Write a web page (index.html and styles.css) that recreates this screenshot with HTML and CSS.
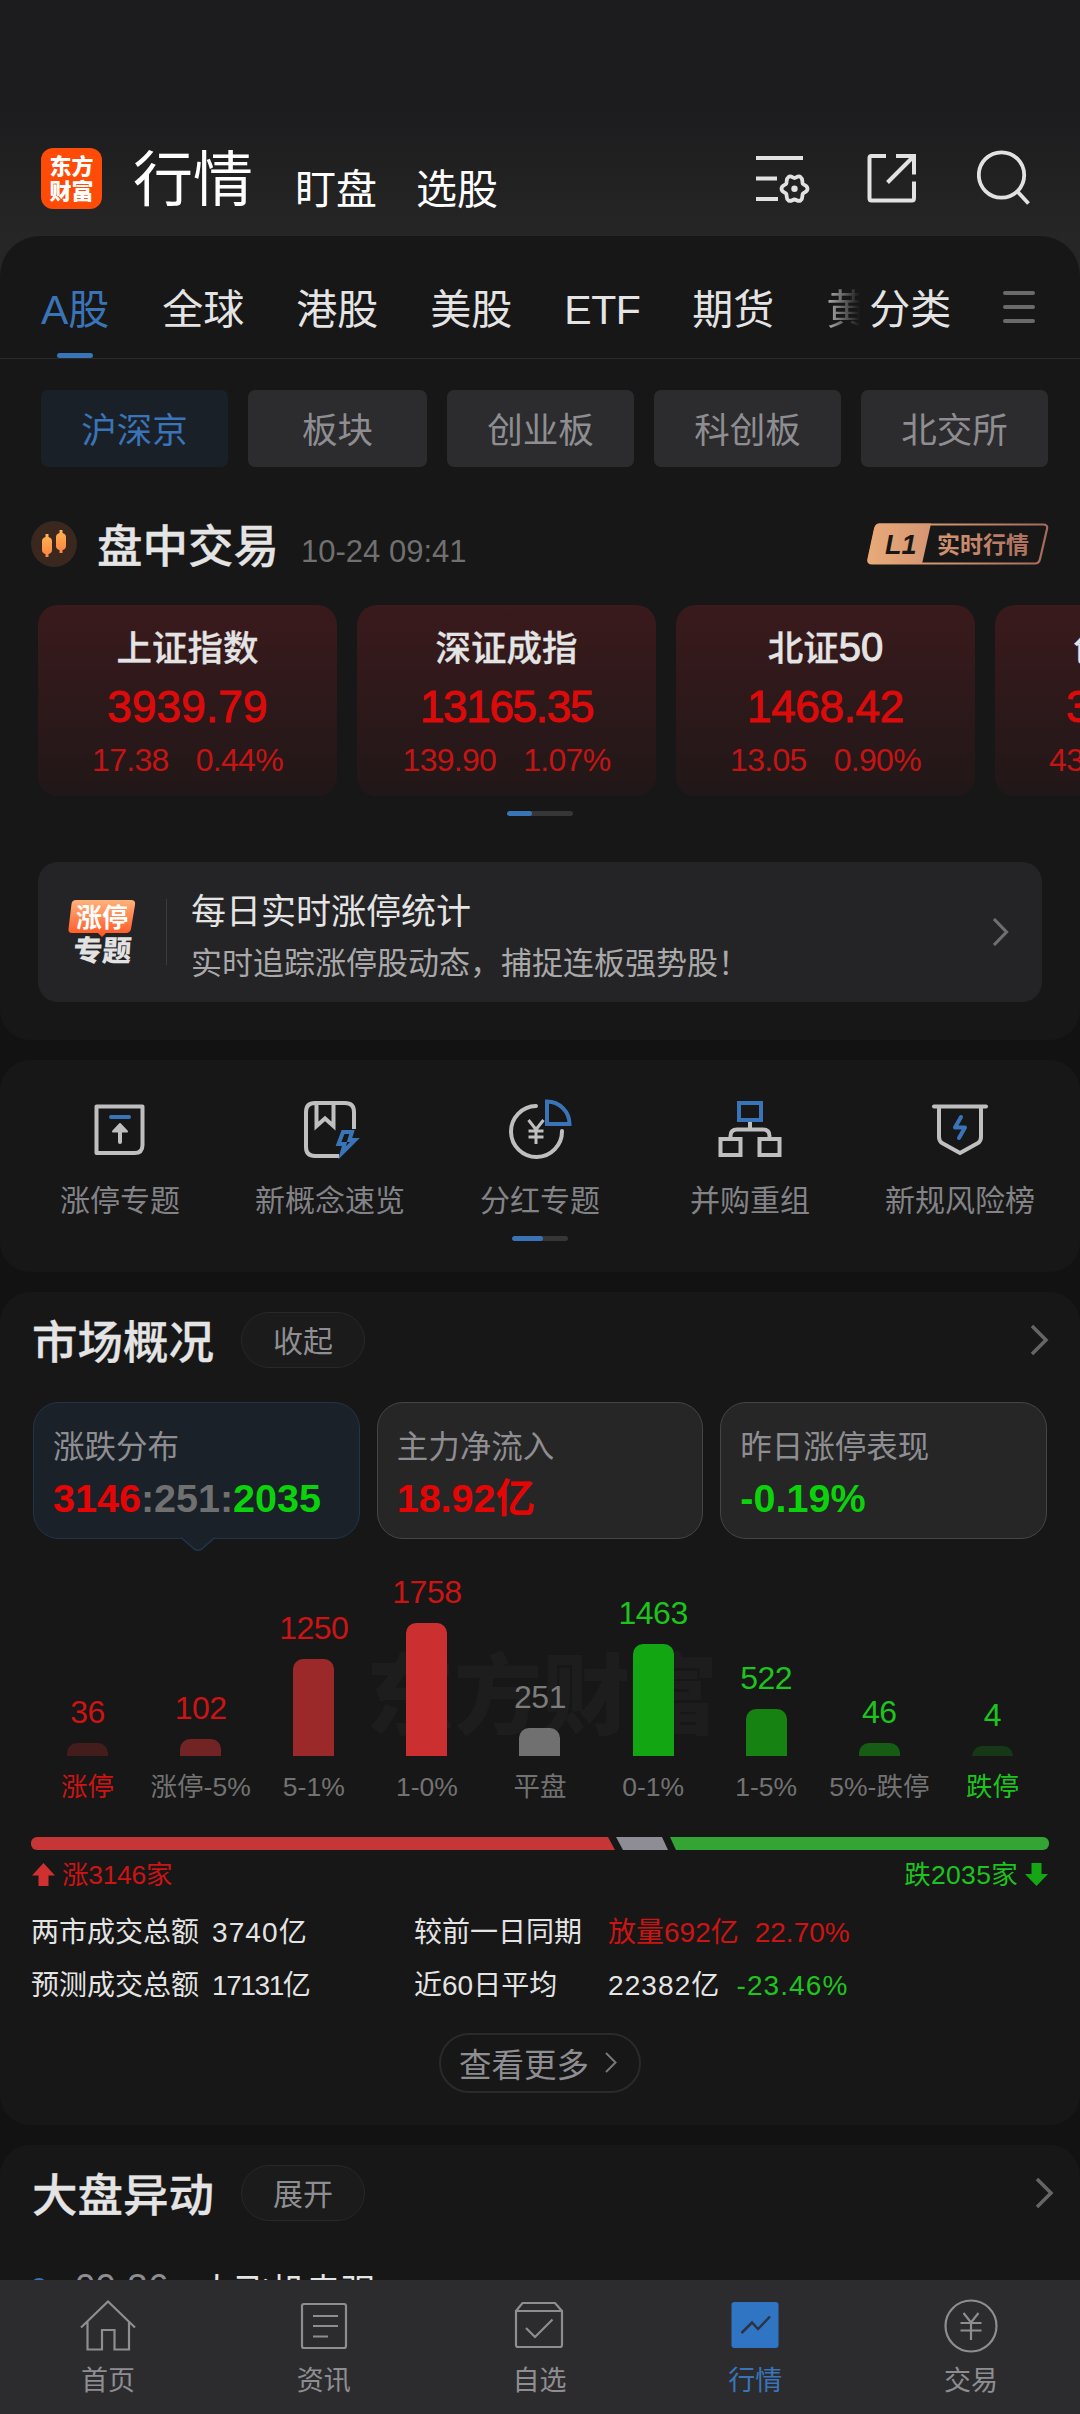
FILE: index.html
```html
<!DOCTYPE html>
<html lang="zh-CN">
<head>
    <meta charset="UTF-8">
    <title>行情</title>
    <link rel="stylesheet" href="styles.css">
</head>
<body>
<div class="page">
    <header class="header">
        <div class="logo"><span>东方</span><span>财富</span></div>
        <h1>行情</h1>
        <a class="nav-link">盯盘</a>
        <a class="nav-link">选股</a>
        <div class="header-icons">
            <svg width="54" height="50" viewBox="0 0 54 50" fill="none" stroke="#e2e2e2" stroke-width="4">
                <path d="M0 5H47M0 25.500H21M0 46H22"/>
                <path stroke-width="3.800" stroke-linejoin="round" d="M38.500 25C40.500 25 42 22 44.500 24C47.500 26 45.500 29 47 31C48.500 32.500 51.500 32.500 51.500 35.700C51.500 39 48.500 39 47 40.500C45.500 42.500 47.500 45.500 44.500 47.500C42 49 40.500 46.500 38.500 46.500S35 49 32.500 47.500C29.500 45.500 31.500 42.500 30 40.500C28.500 39 25.500 39 25.500 35.700C25.500 32.500 28.500 32.500 30 31C31.500 29 29.500 26 32.500 24C35 22 36.500 25 38.500 25Z"/>
                <circle cx="38.500" cy="35.700" r="3.200" fill="#e2e2e2" stroke="none"/>
            </svg>
            <svg class="share" width="50" height="50" viewBox="0 0 50 50" fill="none" stroke="#e2e2e2" stroke-width="4">
                <path d="M19 3H4.500Q2.500 3 2.500 5V45Q2.500 47.500 4.500 47.500H45Q47 47.500 47 45V28.500M29 3H47V21.500M46 4L20.500 29.500"/>
            </svg>
            <svg width="53" height="55" viewBox="0 0 53 55" fill="none" stroke="#e2e2e2" stroke-width="3.800">
                <circle cx="24.500" cy="25" r="22.700"/>
                <path d="M40 41L51.500 53.500"/>
            </svg>
        </div>
    </header>

    <section class="card card-top">
        <nav class="tabs">
            <a class="tab active">A股</a>
            <a class="tab">全球</a>
            <a class="tab">港股</a>
            <a class="tab">美股</a>
            <a class="tab etf">ETF</a>
            <a class="tab">期货</a>
            <a class="tab fade">黄</a>
            <a class="tab sort">分类</a>
            <div class="menu"><i></i><i></i><i></i></div>
        </nav>

        <div class="chips">
            <a class="chip active">沪深京</a>
            <a class="chip short">板块</a>
            <a class="chip">创业板</a>
            <a class="chip">科创板</a>
            <a class="chip">北交所</a>
        </div>

        <div class="trade-head">
            <svg width="46" height="46" viewBox="0 0 46 46">
                <defs>
                    <linearGradient id="candle" x1="0" y1="0" x2="0" y2="1">
                        <stop offset="0" stop-color="#ffb454"/>
                        <stop offset="1" stop-color="#ff8240"/>
                    </linearGradient>
                </defs>
                <circle cx="23" cy="23" r="23" fill="#3a281f"/>
                <path fill="url(#candle)" d="M14.500 13h3v3q3.500 1 3.500 4v9q0 3-3.500 4v3h-3v-3q-3.500-1-3.500-4v-9q0-3 3.500-4z"/>
                <path fill="url(#candle)" d="M28.500 9h3v3q3.500 1 3.500 4v9q0 3-3.500 4v3h-3v-3q-3.500-1-3.500-4v-9q0-3 3.500-4z"/>
            </svg>
            <h2>盘中交易</h2>
            <span class="time">10-24 09:41</span>
            <svg class="level" width="182" height="42" viewBox="0 0 182 42">
                <defs>
                    <linearGradient id="gold" gradientUnits="userSpaceOnUse" x1="0" y1="0" x2="182" y2="0">
                        <stop offset="0" stop-color="#e9aa78"/>
                        <stop offset="0.500" stop-color="#cd8d6f"/>
                        <stop offset="1" stop-color="#a5695c"/>
                    </linearGradient>
                </defs>
                <path fill="none" stroke="url(#gold)" stroke-width="2.200" d="M13 1.500H176Q181 1.500 180 6L173 36Q172 40.500 168 40.500H5Q.5 40.500 1.500 36L8 6Q9 1.500 13 1.500Z"/>
                <path fill="url(#gold)" d="M12 .5H64L55 41H5Q0 41 1 36L7.500 5Q8.500 .5 12 .5Z"/>
                <text class="level-num" x="18" y="31">L1</text>
                <text class="level-text" x="70" y="29.500" fill="url(#gold)">实时行情</text>
            </svg>
        </div>

        <div class="indexes">
            <div class="index">
                <h3>上证指数</h3>
                <strong class="wide">3939.79</strong>
                <p><span>17.38</span><span>0.44%</span></p>
            </div>
            <div class="index">
                <h3>深证成指</h3>
                <strong class="narrow">13165.35</strong>
                <p><span>139.90</span><span>1.07%</span></p>
            </div>
            <div class="index">
                <h3>北证<span>50</span></h3>
                <strong>1468.42</strong>
                <p><span>13.05</span><span>0.90%</span></p>
            </div>
            <div class="index">
                <h3>创业板指</h3>
                <strong>3105.41</strong>
                <p><span>43.25</span><span>1.41%</span></p>
            </div>
        </div>
        <div class="pager"><i></i></div>

        <div class="banner">
            <svg width="68" height="66" viewBox="0 0 68 66">
                <defs>
                    <linearGradient id="hot" x1="0" y1="0" x2="0" y2="1">
                        <stop offset="0" stop-color="#ffb27c"/>
                        <stop offset="1" stop-color="#ff5420"/>
                    </linearGradient>
                </defs>
                <path fill="url(#hot)" d="M8 1H63Q68 1 67 6L63 30Q62 34 58 34H38L34 38L30 34H4Q0 34 .5 30L3.500 5Q4 1 8 1Z"/>
                <text class="hot-top" x="8" y="27.500">涨停</text>
                <text class="hot-bottom" x="9" y="62" transform="skewX(-4)">专题</text>
            </svg>
            <div class="banner-text">
                <h4>每日实时涨停统计</h4>
                <p>实时追踪涨停股动态，捕捉连板强势股！</p>
            </div>
            <svg class="arrow" width="17" height="30" viewBox="0 0 17 30" fill="none" stroke="#6f6f72" stroke-width="3.200"><path d="M2 2L14.500 15L2 28"/></svg>
        </div>
    </section>

    <section class="card shortcuts">
        <div class="shortcut-row">
            <a class="shortcut">
                <svg width="64" height="60" viewBox="0 0 64 60" fill="none" stroke="#bfbfbf" stroke-width="4">
                    <path stroke-linejoin="round" d="M8.500 7.500H54.500V46Q54.500 54 46.500 54H8.500Z"/>
                    <path stroke="#3a74b8" stroke-linecap="round" d="M23 18H41"/>
                    <path stroke-linecap="round" d="M32 30V43"/>
                    <path fill="#bfbfbf" stroke-width="2" stroke-linejoin="round" d="M32 25L39 32.500H25Z"/>
                </svg>
                <span>涨停专题</span>
            </a>
            <a class="shortcut">
                <svg width="64" height="60" viewBox="0 0 64 60" fill="none" stroke="#bfbfbf" stroke-width="4">
                    <path d="M56 30V13Q56 4 47 4H17Q8 4 8 13V48Q8 57 17 57H41"/>
                    <path d="M18.500 4V27L27 19.500L35.500 27V4"/>
                    <path stroke="#3a74b8" d="M45 33H54L51.500 41H57L44 54L46.500 45H40.500Z"/>
                </svg>
                <span>新概念速览</span>
            </a>
            <a class="shortcut">
                <svg width="64" height="60" viewBox="0 0 64 60" fill="none" stroke="#bfbfbf" stroke-width="4">
                    <path stroke-linecap="round" d="M28 7A25.500 25.500 0 1 0 54 32"/>
                    <path stroke="#3a74b8" d="M39 2.500A22.500 22.500 0 0 1 61.500 25H39Z"/>
                    <path stroke-width="3" d="M20.500 21L28 30.500L35.500 21M28 30.500V45M20.500 32H35.500M20.500 38H35.500"/>
                </svg>
                <span>分红专题</span>
            </a>
            <a class="shortcut">
                <svg width="64" height="60" viewBox="0 0 64 60" fill="none" stroke="#bfbfbf" stroke-width="4">
                    <path stroke="#3a74b8" d="M21 4H43V21H21Z"/>
                    <path d="M32 23V30M12.500 39V37Q12.500 30.500 19 30.500H45Q51.500 30.500 51.500 37V39"/>
                    <path d="M2.500 40H22.500V56H2.500ZM41.500 40H61.500V56H41.500Z"/>
                </svg>
                <span>并购重组</span>
            </a>
            <a class="shortcut">
                <svg width="64" height="60" viewBox="0 0 64 60" fill="none" stroke="#bfbfbf" stroke-width="4">
                    <path stroke-linecap="round" d="M6 7.500H58"/>
                    <path stroke-linejoin="round" d="M11 8V38Q11 42 14 44L32 54L50 44Q53 42 53 38V8"/>
                    <path stroke="#3a74b8" stroke-linecap="round" stroke-linejoin="round" d="M33 18L27 28.500H37L31 39"/>
                </svg>
                <span>新规风险榜</span>
            </a>
        </div>
        <div class="pager small"><i></i></div>
    </section>

    <section class="card market">
        <div class="section-head">
            <h2>市场概况</h2>
            <a class="pill">收起</a>
            <svg class="arrow" width="19" height="32" viewBox="0 0 19 32" fill="none" stroke="#666" stroke-width="3.500"><path d="M2 2L16 16L2 30"/></svg>
        </div>

        <div class="stats">
            <div class="stat active">
                <h4>涨跌分布</h4>
                <p><b class="up">3146</b><b class="flat">:251:</b><b class="down">2035</b></p>
                <svg class="pointer" width="34" height="14" viewBox="0 0 34 14"><path fill="#1b2128" stroke="#22344a" stroke-width="1.500" d="M0 .5L14 12.500Q17 14 20 12.500L34 .5"/></svg>
            </div>
            <div class="stat">
                <h4>主力净流入</h4>
                <p><b class="up">18.92亿</b></p>
            </div>
            <div class="stat">
                <h4>昨日涨停表现</h4>
                <p><b class="down">-0.19%</b></p>
            </div>
        </div>

        <div class="chart">
            <div class="watermark">东方财富</div>
            <div class="col up"><span>36</span><i class="bar r1" style="height:13px"></i><em>涨停</em></div>
            <div class="col up"><span>102</span><i class="bar r2" style="height:17px"></i><em class="muted">涨停-5%</em></div>
            <div class="col up"><span>1250</span><i class="bar r3" style="height:97px"></i><em class="muted">5-1%</em></div>
            <div class="col up"><span>1758</span><i class="bar r4" style="height:133px"></i><em class="muted">1-0%</em></div>
            <div class="col even"><span>251</span><i class="bar even-bar" style="height:28px"></i><em class="muted">平盘</em></div>
            <div class="col down"><span>1463</span><i class="bar g4" style="height:112px"></i><em class="muted">0-1%</em></div>
            <div class="col down"><span>522</span><i class="bar g3" style="height:47px"></i><em class="muted">1-5%</em></div>
            <div class="col down"><span>46</span><i class="bar g2" style="height:13px"></i><em class="muted">5%-跌停</em></div>
            <div class="col down"><span>4</span><i class="bar g1" style="height:10px"></i><em>跌停</em></div>
        </div>

        <div class="ratio"><i class="ratio-up"></i><i class="ratio-flat"></i><i class="ratio-down"></i></div>
        <div class="ratio-text">
            <span class="up"><svg width="23" height="24" viewBox="0 0 23 24"><path fill="#d03030" d="M11.500 0L23 12.500H16.500V23H6.500V12.500H0Z"/></svg>涨3146家</span>
            <span class="down">跌2035家<svg width="23" height="24" viewBox="0 0 23 24"><path fill="#14a614" d="M11.500 23L0 11H6.500V0H16.500V11H23Z"/></svg></span>
        </div>

        <div class="turnover">
            <span>两市成交总额</span><span class="wide">3740亿</span><span>较前一日同期</span><span class="up">放量692亿<b>22.70%</b></span>
            <span>预测成交总额</span><span class="narrow">17131亿</span><span>近60日平均</span><span class="wide">22382亿<b class="down">-23.46%</b></span>
        </div>

        <a class="more">查看更多<svg width="12" height="21" viewBox="0 0 12 21" fill="none" stroke="#77777a" stroke-width="2"><path d="M1 1L10.500 10.500L1 20"/></svg></a>
    </section>

    <section class="card moves">
        <div class="section-head">
            <h2>大盘异动</h2>
            <a class="pill">展开</a>
            <svg class="arrow" width="19" height="32" viewBox="0 0 19 32" fill="none" stroke="#666" stroke-width="3.500"><path d="M2 2L16 16L2 30"/></svg>
        </div>
        <div class="move">
            <i></i><time>09:36</time><span>大飞机走强</span>
        </div>
    </section>

    <footer class="tabbar">
        <a>
            <svg width="56" height="54" viewBox="0 0 56 54" fill="none" stroke="#8e8e92" stroke-width="2.200">
                <path d="M1 28.500L28 2.500L55 28.500M7.500 23V50.500H22V31H34.500V50.500H49V23"/>
            </svg>
            <span>首页</span>
        </a>
        <a>
            <svg width="56" height="54" viewBox="0 0 56 54" fill="none" stroke="#8e8e92" stroke-width="2.200">
                <rect x="6" y="5" width="44" height="44" rx="2"/>
                <path d="M17 17H42M17 27H42M17 37.500H32"/>
            </svg>
            <span>资讯</span>
        </a>
        <a>
            <svg width="56" height="54" viewBox="0 0 56 54" fill="none" stroke="#8e8e92" stroke-width="2.200">
                <path d="M5 12L11.500 4H44L51 12V46Q51 48 49 48H7Q5 48 5 46ZM5 12H51M15 29L24 38L41.500 20.500"/>
            </svg>
            <span>自选</span>
        </a>
        <a class="active">
            <svg width="56" height="54" viewBox="0 0 56 54" fill="none">
                <rect x="4.500" y="3" width="47" height="46" rx="3" fill="#3074c4"/>
                <path stroke="#2c3340" stroke-width="2.500" d="M14.500 34L25 23.500L31 30L43 17.500"/>
            </svg>
            <span>行情</span>
        </a>
        <a>
            <svg width="56" height="54" viewBox="0 0 56 54" fill="none" stroke="#8e8e92" stroke-width="2.200">
                <circle cx="28" cy="27" r="25.500"/>
                <path d="M20.500 14L28 23.500L35.500 14M28 23.500V41M17.500 24H38.500M17.500 31.500H38.500"/>
            </svg>
            <span>交易</span>
        </a>
    </footer>
</div>
</body>
</html>
```
FILE: styles.css
```css
* { box-sizing: border-box; }
body { margin: 0; background: #121212; color: #e4e4e4; font-family: "Liberation Sans", "Noto Sans CJK SC", sans-serif; }
h1, h2, h3, h4, p { margin: 0; font-weight: 400; }
i, em { font-style: normal; }
svg { display: block; flex: none; }
.page { width: 1080px; height: 2414px; overflow: hidden; display: flex; flex-direction: column; }
.up { color: #cc1414; }
.down { color: #1dc41d; }

/* header */
.header { flex: none; height: 276px; margin-bottom: -40px; padding: 148px 50px 0 41px; display: flex; align-items: flex-start; background: linear-gradient(#1c1c1e 40%, #262626 86%); color: #fff; }
.logo { width: 61px; height: 61px; border-radius: 12px; background: #ff4b08; display: flex; flex-direction: column; align-items: center; justify-content: center; font-size: 22px; font-weight: 900; line-height: 25px; }
.header h1 { margin-left: 31px; font-size: 60px; line-height: 66px; }
.nav-link { margin: 21px 0 0 42px; font-size: 41px; line-height: 43px; }
.nav-link + .nav-link { margin-left: 39px; }
.header-icons { margin: 2px 0 0 auto; display: flex; gap: 57px; align-items: center; }
.share { margin-right: 3px; }

.card { flex: none; background: #171717; border-radius: 30px; margin-bottom: 20px; }
.card-top { height: 804px; border-radius: 40px 40px 30px 30px; }

/* market tabs */
.tabs { height: 123px; padding: 48px 0 0 41px; display: flex; gap: 52px; border-bottom: 1px solid #2a2a2a; font-size: 41px; line-height: 52px; }
.tab { position: relative; white-space: nowrap; }
.tab.active { color: #3a74b8; margin-right: 1px; }
.tab.active::after { content: ""; position: absolute; left: 16px; bottom: 0; width: 36px; height: 5px; border-radius: 3px; background: #3a74b8; }
.etf { width: 76px; letter-spacing: -0.500px; }
.fade { width: 34px; overflow: hidden; color: transparent; background: linear-gradient(90deg, #b5b5b5, #171717); background-clip: text; -webkit-background-clip: text; }
.sort { margin-left: -43px; }
.menu { margin-top: 7px; width: 32px; display: flex; flex-direction: column; gap: 10px; }
.menu i { height: 4px; border-radius: 2px; background: #6a6a6a; }

.chips { padding: 31px 32px 0 41px; display: flex; gap: 20px; }
.chip { flex: 187 1 0; height: 77px; border-radius: 7px; background: #2c2c2e; color: #8e8e92; font-size: 35.500px; line-height: 82px; text-align: center; }
.chip.short { flex-grow: 179; }
.chip.active { background: #1a2027; color: #3a74b8; }

/* indexes */
.trade-head { margin-top: 46px; height: 62px; padding: 0 31px; display: flex; align-items: center; }
.trade-head h2 { margin-left: 20px; }
h2 { padding-top: 7px; font-size: 45.500px; line-height: 66px; font-weight: 500; -webkit-text-stroke: 0.300px; }
.time { margin: 15px 0 0 22px; font-size: 31px; color: #707070; letter-spacing: 0; }
.level { margin-left: auto; }
.level-num { font: italic bold 27px "Liberation Sans", sans-serif; fill: #171717; }
.level-text { font: bold 23px "Noto Sans CJK SC", sans-serif; }

.indexes { margin-top: 30px; padding-left: 38px; display: flex; gap: 20px; overflow: hidden; }
.index { flex: none; width: 299px; height: 191px; padding-top: 20px; border-radius: 20px; background: linear-gradient(#3a1a1c, #211718); text-align: center; }
.index h3 { height: 48px; font-size: 35.500px; line-height: 48px; font-weight: 500; -webkit-text-stroke: 0.300px; }
.index h3 span { font-size: 40px; line-height: 1; -webkit-text-stroke: 1px; }
.index strong { display: block; font-size: 44px; line-height: 67px; font-weight: 400; color: #dc0b0b; -webkit-text-stroke: 1px; letter-spacing: -0.300px; }
.index strong.wide { letter-spacing: 0.200px; }
.index strong.narrow { letter-spacing: -1.300px; }
.index p { display: flex; justify-content: center; gap: 27px; font-size: 32px; line-height: 40px; color: #c41414; letter-spacing: -0.700px; }

.pager { width: 66px; height: 5px; margin: 15px auto 0; border-radius: 3px; background: #363636; overflow: hidden; }
.pager i { display: block; width: 25px; height: 5px; border-radius: 3px; background: #3a74b8; }
.pager.small { width: 56px; margin-top: 19px; }
.pager.small i { width: 31px; }

.banner { margin: 46px 38px 0; height: 140px; padding: 0 33px 0 30px; border-radius: 20px; background: #242426; display: flex; align-items: center; }
.hot-top { font: bold 26px "Noto Sans CJK SC", sans-serif; fill: #fff; }
.hot-bottom { font: 900 29px "Noto Sans CJK SC", sans-serif; fill: #e2e2e2; }
.banner-text { margin-left: 30px; padding-left: 24px; height: 66px; border-left: 1px solid #3a3a3c; }
.banner-text h4 { margin-top: -13px; font-size: 35px; line-height: 52px; }
.banner-text p { font-size: 31px; line-height: 52px; color: #a9a9a9; }
.arrow { margin-left: auto; }

/* shortcuts */
.shortcuts { height: 212px; padding: 39px 15px 0; }
.shortcut-row { display: flex; }
.shortcut { flex: 1; display: flex; flex-direction: column; align-items: center; font-size: 30px; line-height: 40px; color: #838387; }
.shortcut span { margin-top: 22px; margin-bottom: -4px; white-space: nowrap; }

/* market overview */
.market { height: 833px; padding: 0 31px; }
.section-head { height: 96px; display: flex; align-items: center; padding-left: 1px; }
.pill { margin-left: 27px; width: 124px; height: 56px; border: 1px solid #282828; border-radius: 28px; background: #1b1b1b; color: #8e8e92; font-size: 30px; line-height: 57px; text-align: center; }
.stats { margin-top: 14px; padding: 0 2px; display: flex; gap: 17px; }
.stat { position: relative; flex: 1; height: 137px; padding: 20px 19px; border: 1px solid #454545; border-radius: 26px; background: #262626; }
.stat h4 { font-size: 31.500px; line-height: 48px; color: #8e8e92; }
.stat p { font-size: 39.500px; line-height: 54px; letter-spacing: 0; }
.stat .up { color: #e60505; }
.stat .flat { color: #707070; }
.stat .down { color: #0cd20c; }
.stat.active { background: #1b2128; border-color: #22344a; }
.pointer { position: absolute; left: 147px; top: 134px; }

.chart { position: relative; height: 268px; display: flex; }
.watermark { position: absolute; left: 335px; top: 98px; font-size: 88px; font-weight: 900; line-height: 120px; color: #1d1d1d; }
.col { position: relative; flex: 1; display: flex; flex-direction: column; justify-content: flex-end; align-items: center; white-space: nowrap; }
.col span { font-size: 32px; line-height: 36px; margin-bottom: 13px; letter-spacing: -0.500px; }
.col em { margin-top: 11px; font-size: 26.500px; line-height: 40px; }
.col.even { color: #7c7c7c; }
.col .muted { color: #727272; }
.bar { width: 41px; border-radius: 10px 10px 0 0; }
.r1 { background: #431c1c; }
.r2 { background: #722424; }
.r3 { background: #9c2929; }
.r4 { background: #cc2f2f; }
.even-bar { background: #707070; }
.g1 { background: #173817; }
.g2 { background: #165c14; }
.g3 { background: #158212; }
.g4 { background: #12a612; }

.ratio { margin-top: 30px; height: 13px; display: flex; gap: 1px; }
.ratio-up { width: 584px; border-radius: 6px 0 0 6px; background: #c73636; clip-path: polygon(0 0, calc(100% - 7px) 0, 100% 100%, 0 100%); }
.ratio-flat { width: 52px; background: #8e8c94; clip-path: polygon(0 0, calc(100% - 6px) 0, 100% 100%, 7px 100%); }
.ratio-down { flex: 1; margin-left: 1px; border-radius: 0 6px 6px 0; background: #34a534; clip-path: polygon(0 0, 100% 0, 100% 100%, 6px 100%); }
.ratio-text { margin-top: 7px; padding: 0 1px; height: 36px; display: flex; justify-content: space-between; font-size: 26.500px; line-height: 36px; letter-spacing: -0.300px; }
.ratio-text span { display: flex; align-items: center; gap: 7px; }
.ratio-text .down { letter-spacing: 0.300px; }
.turnover { margin-top: 13px; display: grid; grid-template-columns: 181px 202px 194px 1fr; font-size: 28px; line-height: 53px; white-space: nowrap; }
.turnover b { font-weight: 400; margin-left: 16px; }
.turnover .wide { letter-spacing: 1.100px; }
.turnover .narrow { letter-spacing: -1.400px; }
.more { width: 202px; height: 60px; margin: 21px auto 0; padding: 0 4px 2px 0; border: 2px solid #2a2a2a; border-radius: 30px; display: flex; align-items: center; justify-content: center; gap: 16px; font-size: 32.500px; color: #8e8e92; }

/* moves */
.moves { height: 300px; padding: 0 26px 0 31px; }
.move { margin-top: 17px; display: flex; align-items: center; height: 60px; }
.move i { width: 16px; height: 16px; margin-bottom: 4px; border-radius: 50%; background: #3a74b8; }
.move time { margin-left: 28px; width: 124px; font-size: 36.500px; color: #8e8e92; letter-spacing: 0.500px; }
.move span { font-size: 35.500px; }

/* bottom bar */
.tabbar { position: fixed; left: 0; top: 2280px; width: 1080px; height: 134px; padding: 19px 1px 0 0; background: #2c2c2e; display: flex; }
.tabbar a { flex: 1; display: flex; flex-direction: column; align-items: center; font-size: 27px; line-height: 36px; color: #8e8e92; }
.tabbar span { margin-top: 10px; }
.tabbar .active { color: #3a74b8; }
```
